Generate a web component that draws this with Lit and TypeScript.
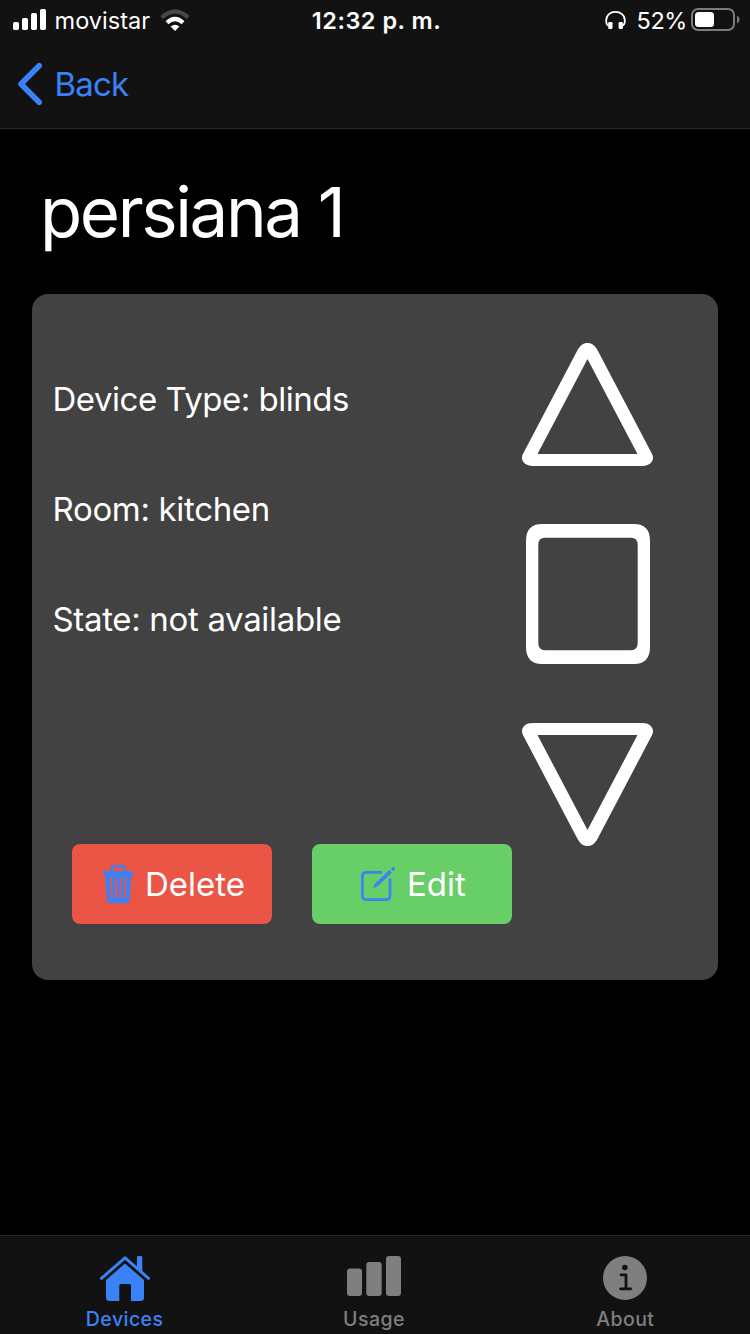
import { LitElement, html, css, svg } from "lit";
import { customElement, property } from "lit/decorators.js";

const TRIANGLE =
  "M10.500 123C2 123-2.300 116.500 1.200 110.500L55.300 7.500C58 2.500 61 0 65.500 0S73 2.500 75.700 7.500L129.800 110.500C133.300 116.500 129 123 120.500 123ZM65.500 16L15.500 111H115.500Z";

@customElement("status-bar")
class StatusBar extends LitElement {
  static styles = css`
    :host {
      display: grid;
      grid-template-columns: 1fr auto 1fr;
      align-items: center;
      height: 40px;
      padding: 0 10px 0 13px;
      color: #fff;
      font-size: 23.500px;
      line-height: 40px;
    }
    .left,
    .right {
      display: flex;
      align-items: center;
      height: 40px;
    }
    .right {
      justify-content: flex-end;
    }
    svg {
      display: block;
      flex: none;
    }
    .carrier,
    .time,
    .level {
      height: 40px;
      line-height: 42px;
    }
    .carrier {
      margin-left: 7.500px;
      letter-spacing: 0.05px;
    }
    .wifi {
      margin-left: 10px;
    }
    .time {
      font-weight: 600;
      letter-spacing: 0.5px;
    }
    .level {
      margin: 0 4px 0 10px;
      letter-spacing: -0.4px;
    }
  `;

  render() {
    return html`
      <div class="left">
        <svg width="34" height="40" viewBox="0 0 34 40" fill="#fff">
          <rect x="0" y="22" width="6" height="8" rx="1.700" />
          <rect x="9" y="18" width="6" height="12" rx="1.700" />
          <rect x="18" y="13" width="6" height="17" rx="1.700" />
          <rect x="27" y="9" width="6" height="21" rx="1.700" />
        </svg>
        <span class="carrier">movistar</span>
        <svg class="wifi" width="30" height="40" viewBox="0 0 30 40">
          <path d="M15 31L10.600 26.600Q15 22.800 19.400 26.600Z" fill="#fff" />
          <path d="M7 22.700Q15 15.300 23 22.700" fill="none" stroke="#fff" stroke-width="4.200" />
          <path d="M1.800 17.500Q15 5.500 28.200 17.500" fill="none" stroke="#48484a" stroke-width="4.200" />
        </svg>
      </div>
      <span class="time">12:32 p. m.</span>
      <div class="right">
        <svg width="22" height="40" viewBox="0 0 22 40">
          <path d="M3.500 25.500Q1.200 25 1.200 20.500C1.200 14.800 5.500 11.900 10.500 11.900S19.800 14.800 19.800 20.500Q19.800 25 17.500 25.500" fill="none" stroke="#fff" stroke-width="1.800" />
          <rect x="3.200" y="22" width="4.300" height="7" rx="1.300" fill="#fff" />
          <rect x="13.600" y="22" width="4.300" height="7" rx="1.300" fill="#fff" />
        </svg>
        <span class="level">52%</span>
        <svg width="49" height="40" viewBox="0 0 49 40">
          <rect x="1" y="9" width="42" height="21" rx="6" fill="none" stroke="#7c7c7c" stroke-width="2" />
          <rect x="4" y="12" width="19" height="15" rx="3.500" fill="#fff" />
          <path d="M46 15.500Q48.600 17 48.600 19.500T46 23.500Z" fill="#7c7c7c" />
        </svg>
      </div>
    `;
  }
}

@customElement("tab-item")
class TabItem extends LitElement {
  @property() label = "";
  static styles = css`
    :host {
      flex: 1;
      display: flex;
      flex-direction: column;
      align-items: center;
      padding-top: 20px;
      color: #7f7f7f;
    }
    :host([active]) {
      color: #3a82f7;
    }
    .label {
      font-size: 19.500px;
      font-weight: 500;
      line-height: 24px;
      margin-top: 5px;
      letter-spacing: 0.45px;
    }
  `;
  render() {
    return html`<slot></slot><span class="label">${this.label}</span>`;
  }
}

const homeIcon = svg`
  <path d="M1.500 22.300L25 1.800L48.500 22.300" fill="none" stroke="currentColor" stroke-width="3" stroke-linecap="round" stroke-linejoin="round" />
  <path d="M37 1.200Q37 0 38.200 0H41.100Q42.300 0 42.300 1.200V16L37 11.500Z" fill="currentColor" />
  <path d="M25 7.500L44 24V41.500Q44 45 40.500 45H31V29.500Q31 28 29.500 28H20.800Q19.300 28 19.300 29.500V45H9.500Q6 45 6 41.500V24Z" fill="currentColor" />`;

@customElement("app-root")
class AppRoot extends LitElement {
  static styles = css`
    :host {
      display: flex;
      flex-direction: column;
      box-sizing: border-box;
      width: 750px;
      height: 1334px;
      overflow: hidden;
      background: #000;
      color: #fff;
      font-family: Inter, "Liberation Sans", sans-serif;
      -webkit-font-smoothing: antialiased;
    }
    svg {
      display: block;
      flex: none;
    }
    .top {
      box-sizing: border-box;
      height: 129px;
      background: #121212;
      border-bottom: 1px solid #2a2a2a;
    }
    .nav {
      display: flex;
      align-items: center;
      height: 88px;
      padding-left: 17px;
      gap: 10.500px;
      color: #3a82f7;
      font-size: 33px;
      line-height: 88px;
    }
    .nav span {
      letter-spacing: -0.8px;
    }
    .page {
      flex: 1;
      padding: 0 32px;
    }
    .title {
      margin: 0;
      padding: 43px 0 42px 8px;
      font-size: 69px;
      font-weight: 400;
      line-height: 80px;
      letter-spacing: -2.4px;
    }
    .card {
      box-sizing: border-box;
      display: flex;
      justify-content: space-between;
      height: 686px;
      padding: 49px 65px 0 20px;
      border-radius: 16px;
      background: #424242;
    }
    .row {
      height: 110px;
      padding-left: 0.5px;
      line-height: 110px;
      font-size: 33px;
      letter-spacing: -0.33px;
      white-space: nowrap;
    }
    .row.type {
      letter-spacing: -0.48px;
    }
    .info {
      padding-top: 1px;
    }
    .actions {
      display: flex;
      gap: 40px;
      padding: 170px 0 0 20px;
    }
    .button {
      box-sizing: border-box;
      display: flex;
      align-items: center;
      width: 200px;
      height: 80px;
      border: 0;
      border-radius: 8px;
      color: #fff;
      font: 400 33px/80px Inter, "Liberation Sans", sans-serif;
    }
    .delete {
      padding: 0 0 0 30px;
      gap: 10px;
      background: #eb5545;
    }
    .edit {
      padding: 0 0 0 48px;
      gap: 11px;
      background: #68ce67;
    }
    .controls {
      display: flex;
      flex-direction: column;
      align-items: center;
      width: 131px;
    }
    .stop {
      margin: 58px 0 59px 1px;
    }
    .tabs {
      box-sizing: border-box;
      display: flex;
      height: 99px;
      background: #121212;
      border-top: 1px solid #2a2a2a;
    }
    .usage {
      padding-right: 2px;
    }
  `;

  render() {
    return html`
      <header class="top">
        <status-bar></status-bar>
        <div class="nav">
          <svg width="27" height="44" viewBox="0 0 27 44">
            <path d="M22.200 3.700L4 22L22.200 40.300" fill="none" stroke="currentColor" stroke-width="5.600" stroke-linecap="round" stroke-linejoin="round" />
          </svg>
          <span>Back</span>
        </div>
      </header>
      <main class="page">
        <h1 class="title">persiana 1</h1>
        <section class="card">
          <div class="info">
            <div class="row type">Device Type: blinds</div>
            <div class="row">Room: kitchen</div>
            <div class="row">State: not available</div>
            <div class="actions">
              <button class="button delete">
                <svg width="33" height="40" viewBox="0 0 33 40">
                  <path d="M10 8V4Q10 2.300 12 2.300H20.500Q22.500 2.300 22.500 4V8" fill="none" stroke="#3a82f7" stroke-width="2.600" />
                  <rect x="0" y="7.200" width="32" height="3" rx="1.500" fill="#3a82f7" />
                  <path d="M3 9H29.500L27.500 36Q27.200 39.300 24 39.300H8.500Q5.300 39.300 5 36Z" fill="#3a82f7" />
                  <path d="M8.800 14L9.800 33.500M13.900 14L14.300 33.500M18.700 14L18.300 33.500M23.800 14L22.800 33.500" fill="none" stroke="#eb5545" stroke-width="1.800" stroke-linecap="round" />
                </svg>
                <span>Delete</span>
              </button>
              <button class="button edit">
                <svg width="36" height="40" viewBox="0 0 36 40" fill="none" stroke="#3a82f7" stroke-width="2.700">
                  <path d="M22 8.400H6.400Q2.400 8.400 2.400 12.400V31.700Q2.400 35.700 6.400 35.700H26Q30 35.700 30 31.700V14.500" />
                  <path d="M29.300 6L32 8.700L17.500 22.300L13 24.300L14.900 19.800Z" fill="#3a82f7" stroke="none" />
                  <circle cx="33.200" cy="4.900" r="1.900" fill="#3a82f7" stroke="none" />
                </svg>
                <span>Edit</span>
              </button>
            </div>
          </div>
          <div class="controls">
            <svg width="131" height="123" viewBox="0 0 131 123">
              <path d=${TRIANGLE} fill="#fff" fill-rule="evenodd" />
            </svg>
            <svg class="stop" width="124" height="140" viewBox="0 0 124 140">
              <path fill="#fff" fill-rule="evenodd" d="M16 0H108Q124 0 124 17V123Q124 140 108 140H16Q0 140 0 123V17Q0 0 16 0ZM19 13.800Q12.300 13.800 12.300 21V119Q12.300 126.200 19 126.200H105Q111.700 126.200 111.700 119V21Q111.700 13.800 105 13.800Z" />
            </svg>
            <svg width="131" height="123" viewBox="0 0 131 123">
              <path d=${TRIANGLE} transform="matrix(1 0 0 -1 0 123)" fill="#fff" fill-rule="evenodd" />
            </svg>
          </div>
        </section>
      </main>
      <nav class="tabs">
        <tab-item label="Devices" active>
          <svg width="50" height="46" viewBox="0 0 50 46">${homeIcon}</svg>
        </tab-item>
        <tab-item class="usage" label="Usage">
          <svg width="54" height="46" viewBox="0 0 54 46" fill="currentColor">
            <rect x="0" y="12.500" width="15" height="27.500" rx="3.200" />
            <rect x="19.300" y="6" width="15.400" height="34" rx="3.200" />
            <rect x="39" y="0" width="15" height="40" rx="3.200" />
          </svg>
        </tab-item>
        <tab-item label="About">
          <svg width="44" height="46" viewBox="0 0 44 46">
            <circle cx="22" cy="22" r="22" fill="currentColor" />
            <circle cx="21.800" cy="11.500" r="2.800" fill="#121212" />
            <path d="M18 18.800H23V32.800M17.500 32.800H27.700" fill="none" stroke="#121212" stroke-width="2.800" stroke-linecap="round" stroke-linejoin="round" />
          </svg>
        </tab-item>
      </nav>
    `;
  }
}
